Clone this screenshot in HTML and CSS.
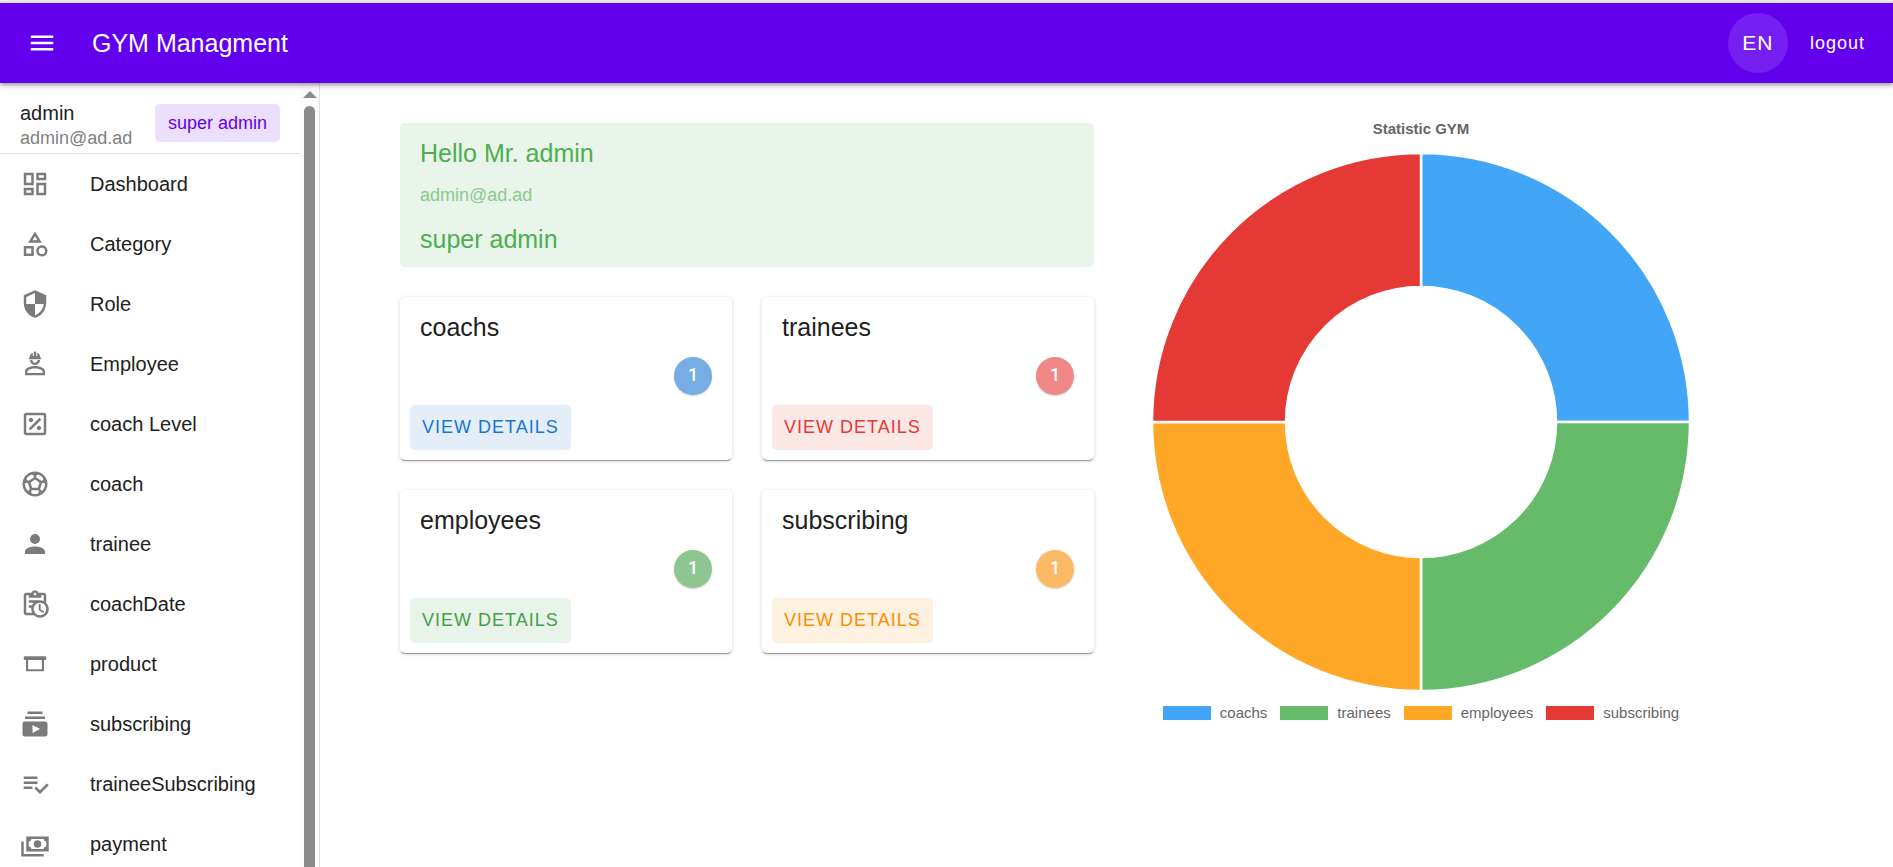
FILE: index.html
```html
<!DOCTYPE html>
<html lang="en">
<head>
<meta charset="utf-8">
<meta name="viewport" content="width=device-width, initial-scale=1">
<title>GYM Managment</title>
<link rel="stylesheet" href="styles.css">
</head>
<body>
<header class="app-bar">
  <button class="menu-button" type="button" aria-label="Toggle navigation">
    <svg class="icon" viewBox="0 0 24 24"><path d="M3,6H21V8H3V6M3,11H21V13H3V11M3,16H21V18H3V16Z"/></svg>
  </button>
  <h1 class="app-title">GYM Managment</h1>
  <button class="lang-button" type="button">EN</button>
  <button class="logout-button" type="button">logout</button>
</header>
<div class="layout">
  <aside class="drawer">
    <div class="drawer-content">
      <div class="profile">
        <div class="profile-text">
          <div class="profile-name">admin</div>
          <div class="profile-email">admin@ad.ad</div>
        </div>
        <span class="chip">super admin</span>
      </div>
      <nav class="nav">
        <a class="nav-item" href="#dashboard"><svg class="icon" viewBox="0 0 24 24"><path d="M19,5V7H15V5H19M9,5V11H5V5H9M19,13V19H15V13H19M9,17V19H5V17H9M21,3H13V9H21V3M11,3H3V13H11V3M21,11H13V21H21V11M11,15H3V21H11V15Z"/></svg>Dashboard</a>
        <a class="nav-item" href="#category"><svg class="icon" viewBox="0 0 24 24"><path d="M11,13.5V21.5H3V13.5H11M9,15.5H5V19.5H9V15.5M12,2L17.5,11H6.5L12,2M12,5.86L10.08,9H13.92L12,5.86M17.5,13C20,13 22,15 22,17.5C22,20 20,22 17.5,22C15,22 13,20 13,17.5C13,15 15,13 17.5,13M17.5,15A2.5,2.5 0 0,0 15,17.5A2.5,2.5 0 0,0 17.5,20A2.5,2.5 0 0,0 20,17.5A2.5,2.5 0 0,0 17.5,15Z"/></svg>Category</a>
        <a class="nav-item" href="#role"><svg class="icon" viewBox="0 0 24 24"><path d="M12,12H19C18.47,16.11 15.72,19.78 12,20.92V12H5V6.3L12,3.19M12,1L3,5V11C3,16.55 6.84,21.73 12,23C17.16,21.73 21,16.55 21,11V5L12,1Z"/></svg>Role</a>
        <a class="nav-item" href="#employee"><svg class="icon" viewBox="0 0 24 24"><path fill-rule="evenodd" d="M12 13.6C7.58 13.6 4 15.4 4 18V21H20V18C20 15.4 16.42 13.6 12 13.6ZM18.1 19.1H5.9V18C5.9 16.9 8.4 15.5 12 15.5S18.1 16.9 18.1 18ZM8 8.8C8 11 9.79 12.8 12 12.8S16 11 16 8.8H14.1C14.1 9.96 13.16 10.9 12 10.9S9.9 9.96 9.9 8.8ZM11.5 2C11.2 2 11 2.21 11 2.5V5.5H10.2V3C10.2 3 7.75 3.86 7.75 6.75C7.75 6.75 7 6.89 7 8.1H17C17 6.89 16.25 6.75 16.25 6.75C16.25 3.86 13.8 3 13.8 3V5.5H13V2.5C13 2.21 12.81 2 12.5 2Z"/></svg>Employee</a>
        <a class="nav-item" href="#coach-level"><svg class="icon" viewBox="0 0 24 24"><path d="M19 3H5C3.9 3 3 3.9 3 5V19C3 20.1 3.9 21 5 21H19C20.1 21 21 20.1 21 19V5C21 3.9 20.1 3 19 3M19 19H5V5H19V19M8.83 7.05C9.81 7.05 10.6 7.84 10.6 8.83S9.81 10.6 8.83 10.6C7.84 10.6 7.05 9.81 7.05 8.83S7.84 7.05 8.83 7.05M15.22 17C14.24 17 13.45 16.2 13.45 15.22S14.24 13.45 15.22 13.45C16.2 13.45 17 14.24 17 15.22S16.2 17 15.22 17M8.5 17.03L7 15.53L15.53 7L17.03 8.5L8.5 17.03Z"/></svg>coach Level</a>
        <a class="nav-item" href="#coach"><svg class="icon" viewBox="0 0 24 24"><path fill-rule="evenodd" d="M12 2C6.48 2 2 6.48 2 12s4.48 10 10 10 10-4.48 10-10S17.52 2 12 2zm1 3.3l1.35-.95c1.82.56 3.37 1.76 4.38 3.34l-.39 1.34-1.35.46L13 6.7V5.3zm-3.35-.95L11 5.3v1.4L7.01 9.49l-1.35-.46-.39-1.34c1.01-1.57 2.56-2.77 4.38-3.34zM7.08 17.11l-1.14.1C4.73 15.81 4 13.99 4 12c0-.12.01-.23.02-.35l1-.73L6.4 11.4l1.46 4.34-.78 1.37zm7.42 2.48c-.79.26-1.63.41-2.5.41s-1.71-.15-2.5-.41l-.69-1.49.64-1.1h5.11l.64 1.11-.7 1.48zM14.27 15H9.73l-1.35-4.02L12 8.44l3.63 2.54L14.27 15zm3.79 2.21l-1.14-.1-.79-1.37 1.46-4.34 1.39-.47 1 .73c.01.11.02.22.02.34 0 1.99-.73 3.81-1.94 5.21z"/></svg>coach</a>
        <a class="nav-item" href="#trainee"><svg class="icon" viewBox="0 0 24 24"><path d="M12,4A4,4 0 0,1 16,8A4,4 0 0,1 12,12A4,4 0 0,1 8,8A4,4 0 0,1 12,4M12,14C16.42,14 20,15.79 20,18V20H4V18C4,15.79 7.58,14 12,14Z"/></svg>trainee</a>
        <a class="nav-item" href="#coach-date"><svg class="icon" viewBox="0 0 24 24"><path d="M21 11.11V5C21 3.9 20.11 3 19 3H14.82C14.4 1.84 13.3 1 12 1S9.6 1.84 9.18 3H5C3.9 3 3 3.9 3 5V19C3 20.11 3.9 21 5 21H11.11C12.37 22.24 14.09 23 16 23C19.87 23 23 19.87 23 16C23 14.09 22.24 12.37 21 11.11M12 3C12.55 3 13 3.45 13 4S12.55 5 12 5 11 4.55 11 4 11.45 3 12 3M5 19V5H7V7H17V5H19V9.68C18.09 9.25 17.08 9 16 9H7V11H11.1C10.5 11.57 10.04 12.25 9.68 13H7V15H9.08C9.03 15.33 9 15.66 9 16C9 17.08 9.25 18.09 9.68 19H5M16 21C13.24 21 11 18.76 11 16S13.24 11 16 11 21 13.24 21 16 18.76 21 16 21M16.5 16.25L19.36 17.94L18.61 19.16L15 17V12H16.5V16.25Z"/></svg>coachDate</a>
        <a class="nav-item" href="#product"><svg class="icon" viewBox="0 0 24 24"><path fill-rule="evenodd" d="M4 5.8H20A1 1 0 0 1 21 6.8V8A.8 .8 0 0 1 20.2 8.8H19.2V17.8H4.8V8.8H3.8A.8 .8 0 0 1 3 8V6.8A1 1 0 0 1 4 5.8ZM6.5 8.8V16.2H17.5V8.8Z"/></svg>product</a>
        <a class="nav-item" href="#subscribing"><svg class="icon" viewBox="0 0 24 24"><path d="M20,8H4V6H20V8M18,2H6V4H18V2M22,12V20A2,2 0 0,1 20,22H4A2,2 0 0,1 2,20V12A2,2 0 0,1 4,10H20A2,2 0 0,1 22,12M16,16L10,12.73V19.26L16,16Z"/></svg>subscribing</a>
        <a class="nav-item" href="#trainee-subscribing"><svg class="icon" viewBox="0 0 24 24"><path d="M14 10H3V12H14V10M14 6H3V8H14V6M3 16H10V14H3V16M21.5 11.5L23 13L16 20L11.5 15.5L13 14L16 17L21.5 11.5Z"/></svg>traineeSubscribing</a>
        <a class="nav-item" href="#payment"><svg class="icon" viewBox="0 0 24 24"><path d="M5,6H23V18H5V6M14,9A3,3 0 0,1 17,12A3,3 0 0,1 14,15A3,3 0 0,1 11,12A3,3 0 0,1 14,9M9,8A2,2 0 0,1 7,10V14A2,2 0 0,1 9,16H19A2,2 0 0,1 21,14V10A2,2 0 0,1 19,8H9M1,10H3V20H19V22H1V10Z"/></svg>payment</a>
      </nav>
    </div>
    <div class="scrollbar" aria-hidden="true">
      <div class="scroll-arrow"></div>
      <div class="scroll-thumb"></div>
    </div>
  </aside>
  <main class="content">
    <div class="overview">
      <section class="greeting">
        <h2 class="greeting-title">Hello Mr. admin</h2>
        <p class="greeting-email">admin@ad.ad</p>
        <p class="greeting-title">super admin</p>
      </section>
      <div class="cards">
        <article class="card blue">
          <h2 class="card-title">coachs</h2>
          <span class="count">1</span>
          <button class="details" type="button">VIEW DETAILS</button>
        </article>
        <article class="card red">
          <h2 class="card-title">trainees</h2>
          <span class="count">1</span>
          <button class="details" type="button">VIEW DETAILS</button>
        </article>
        <article class="card green">
          <h2 class="card-title">employees</h2>
          <span class="count">1</span>
          <button class="details" type="button">VIEW DETAILS</button>
        </article>
        <article class="card orange">
          <h2 class="card-title">subscribing</h2>
          <span class="count">1</span>
          <button class="details" type="button">VIEW DETAILS</button>
        </article>
      </div>
    </div>
    <section class="chart">
      <h2 class="chart-title">Statistic GYM</h2>
      <svg class="donut" viewBox="0 0 538 538" role="img" aria-label="Equal shares of coachs, trainees, employees and subscribing">
        <g stroke="#fff" stroke-width="2.5">
          <path fill="#42a5f5" d="M269 0A269 269 0 0 1 538 269H404A135 135 0 0 0 269 134Z"/>
          <path fill="#66bb6a" d="M538 269A269 269 0 0 1 269 538V404A135 135 0 0 0 404 269Z"/>
          <path fill="#ffa726" d="M269 538A269 269 0 0 1 0 269H134A135 135 0 0 0 269 404Z"/>
          <path fill="#e53935" d="M0 269A269 269 0 0 1 269 0V134A135 135 0 0 0 134 269Z"/>
        </g>
      </svg>
      <ul class="legend">
        <li class="legend-item"><span class="swatch swatch-blue"></span>coachs</li>
        <li class="legend-item"><span class="swatch swatch-green"></span>trainees</li>
        <li class="legend-item"><span class="swatch swatch-orange"></span>employees</li>
        <li class="legend-item"><span class="swatch swatch-red"></span>subscribing</li>
      </ul>
    </section>
  </main>
</div>
</body>
</html>
```
FILE: styles.css
```css
*, *::before, *::after { box-sizing: border-box; }

body {
  margin: 0;
  padding-top: 1px;
  height: 100vh;
  display: flex;
  flex-direction: column;
  overflow: hidden;
  background: #fff;
  color: #212121;
  font-family: "Liberation Sans", Arial, sans-serif;
  font-size: 20px;
}

h1, h2, p, ul { margin: 0; padding: 0; font-weight: 400; }
button { border: 0; font-family: inherit; cursor: pointer; }

.icon { display: block; flex: none; width: 30px; height: 30px; fill: currentColor; }

.app-bar {
  flex: none;
  z-index: 1;
  display: flex;
  align-items: center;
  height: 82px;
  padding: 0 20px;
  border-top: 2px solid #e0e3e3;
  background: #6200ee;
  color: #fff;
  box-shadow: 0 2px 4px rgba(0, 0, 0, .35), 0 1px 10px rgba(0, 0, 0, .12);
}
.menu-button { padding: 7px; background: none; color: inherit; }
.app-title { margin-left: 28px; font-size: 25px; line-height: 40px; }
.lang-button {
  width: 60px;
  height: 60px;
  margin-left: auto;
  padding: 0;
  border-radius: 50%;
  background: rgba(255, 255, 255, .12);
  color: inherit;
  font-size: 21px;
  letter-spacing: 1px;
}
.logout-button {
  margin-left: 14px;
  padding: 8px;
  background: none;
  color: inherit;
  font-size: 18px;
  letter-spacing: 1px;
}

.layout { flex: 1; min-height: 0; display: flex; }

.drawer {
  flex: none;
  display: flex;
  width: 320px;
  border-right: 1px solid #e0e0e0;
  overflow: hidden;
}
.drawer-content { flex: 1; }
.profile {
  display: flex;
  align-items: center;
  justify-content: space-between;
  height: 71px;
  padding: 9px 20px 0;
  border-bottom: 1px solid #e0e0e0;
}
.profile-name { line-height: 26px; }
.profile-email { font-size: 18px; line-height: 24px; color: #7f7f7f; }
.profile-text { padding-top: 4px; }
.chip {
  padding: 0 13px;
  border-radius: 5px;
  background: #ecdffd;
  color: #6200ee;
  font-size: 18px;
  line-height: 38px;
}
.nav-item {
  display: flex;
  align-items: center;
  gap: 40px;
  height: 60px;
  padding: 0 20px;
  color: inherit;
  text-decoration: none;
}
.nav-item .icon { color: #7b7b7b; }

.scrollbar {
  display: flex;
  flex-direction: column;
  align-items: center;
  gap: 8px;
  width: 19px;
  padding-top: 8px;
  background: #fcfcfc;
}
.scroll-arrow {
  border: 7px solid transparent;
  border-top-width: 0;
  border-bottom-color: #8b8b8b;
}
.scroll-thumb { flex: 1; width: 11px; border-radius: 6px 6px 0 0; background: #8b8b8b; }

.content {
  flex: 1;
  display: grid;
  grid-template-columns: 1fr 1fr;
  align-content: start;
  gap: 30px;
  padding: 40px 75px 40px 80px;
}
.overview { display: grid; align-content: start; gap: 30px; }

.greeting {
  padding: 10px 20px 8px;
  border-radius: 5px;
  background: #e9f4ea;
  color: #4caf50;
}
.greeting-title { font-size: 25px; line-height: 40px; }
.greeting-email { margin: 9px 0 11px; font-size: 18px; line-height: 26px; opacity: .6; }

.cards { display: grid; grid-template-columns: 1fr 1fr; gap: 30px; }
.card {
  display: flex;
  flex-direction: column;
  align-items: flex-start;
  gap: 10px;
  padding: 10px;
  border-radius: 5px;
  box-shadow: 0 2px 1px -1px rgba(0, 0, 0, .35), 0 1px 4px rgba(0, 0, 0, .16);
}
.card-title { padding: 0 10px; font-size: 25px; line-height: 40px; }
.count {
  align-self: flex-end;
  width: 38px;
  height: 38px;
  margin-right: 10px;
  border-radius: 50%;
  box-shadow: 0 1px 2px rgba(0, 0, 0, .2);
  color: #fff;
  font-family: Roboto, "Liberation Sans", sans-serif;
  font-size: 18px;
  font-weight: 500;
  line-height: 36px;
  text-align: center;
}
.details {
  height: 45px;
  padding: 0 12px;
  border-radius: 5px;
  font-size: 18px;
  letter-spacing: 1px;
}
.blue .count { background: #75ade4; }
.blue .details { background: #e3eef9; color: #1976d2; }
.red .count { background: #ef8886; }
.red .details { background: #fbe7e6; color: #e53935; }
.green .count { background: #8ec691; }
.green .details { background: #e8f3e9; color: #43a047; }
.orange .count { background: #fdba66; }
.orange .details { background: #fff1e0; color: #fb8c00; }

.chart {
  display: flex;
  flex-direction: column;
  align-items: center;
  max-width: 594px;
  padding: 0 28px;
  color: #666;
  font-size: 15px;
}
.chart-title { font-size: 15px; font-weight: 700; line-height: 12px; }
.donut { display: block; width: 100%; margin: 18px 0 14px; }
.legend { display: flex; gap: 13px; list-style: none; line-height: 16px; }
.legend-item { display: flex; align-items: center; gap: 9px; }
.swatch { width: 48px; height: 14px; }
.swatch-blue { background: #42a5f5; }
.swatch-green { background: #66bb6a; }
.swatch-orange { background: #ffa726; }
.swatch-red { background: #e53935; }
```
